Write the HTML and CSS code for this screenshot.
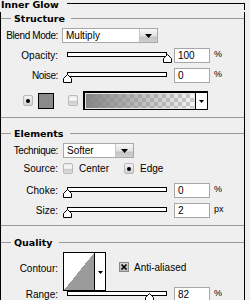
FILE: index.html
```html
<!DOCTYPE html>
<html>
<head>
<meta charset="utf-8">
<link rel="stylesheet" href="styles.css">
</head>
<body>
<div class="panel">
  <div class="hd"><span class="hd-title">Inner Glow</span><span class="hd-line"></span></div>
  <div class="frame">
    <section class="sec sec-structure">
      <div class="sec-hd"><span class="ln-s"></span><span class="sec-title">Structure</span><span class="ln"></span></div>
      <div class="row r-blend">
        <span class="lbl tight">Blend Mode:</span>
        <div class="select w-blend"><span class="sel-val">Multiply</span><span class="sel-btn"><svg width="7" height="4" viewBox="0 0 7 4"><path d="M0 0h7L3.5 4z"/></svg></span></div>
      </div>
      <div class="row r-opacity">
        <span class="lbl">Opacity:</span>
        <div class="slider"><div class="track"></div><svg class="thumb" style="left:100px" width="9" height="9" viewBox="0 0 9 9"><path d="M4.5 .5L8.5 4.5V8.5H.5V4.5z" fill="#fff" stroke="#000"/></svg></div>
        <div class="num">100</div><span class="unit">%</span>
      </div>
      <div class="row r-noise">
        <span class="lbl tight">Noise:</span>
        <div class="slider"><div class="track"></div><svg class="thumb" style="left:0px" width="9" height="9" viewBox="0 0 9 9"><path d="M4.5 .5L8.5 4.5V8.5H.5V4.5z" fill="#fff" stroke="#000"/></svg></div>
        <div class="num">0</div><span class="unit">%</span>
      </div>
      <div class="row-color">
        <span class="radio on"></span>
        <span class="swatch"></span>
        <span class="radio r2"></span>
        <div class="grad-box"><span class="grad"></span><span class="grad-btn"><svg width="5" height="3" viewBox="0 0 5 3"><path d="M0 0h5L2.5 3z"/></svg></span></div>
      </div>
    </section>

    <section class="sec sec-elements">
      <div class="sec-hd"><span class="ln-s"></span><span class="sec-title">Elements</span><span class="ln"></span></div>
      <div class="row r-tech">
        <span class="lbl tight">Technique:</span>
        <div class="select w-tech"><span class="sel-val">Softer</span><span class="sel-btn"><svg width="7" height="4" viewBox="0 0 7 4"><path d="M0 0h7L3.5 4z"/></svg></span></div>
      </div>
      <div class="row r-source">
        <span class="lbl">Source:</span>
        <span class="radio"></span><span class="opt">Center</span>
        <span class="radio on r-edge"></span><span class="opt">Edge</span>
      </div>
      <div class="row r-choke">
        <span class="lbl">Choke:</span>
        <div class="slider"><div class="track"></div><svg class="thumb" style="left:0px" width="9" height="9" viewBox="0 0 9 9"><path d="M4.5 .5L8.5 4.5V8.5H.5V4.5z" fill="#fff" stroke="#000"/></svg></div>
        <div class="num">0</div><span class="unit">%</span>
      </div>
      <div class="row r-size">
        <span class="lbl">Size:</span>
        <div class="slider"><div class="track"></div><svg class="thumb" style="left:0px" width="9" height="9" viewBox="0 0 9 9"><path d="M4.5 .5L8.5 4.5V8.5H.5V4.5z" fill="#fff" stroke="#000"/></svg></div>
        <div class="num">2</div><span class="unit">px</span>
      </div>
    </section>

    <section class="sec-quality">
      <div class="sec-hd"><span class="ln-s"></span><span class="sec-title">Quality</span><span class="ln"></span></div>
      <div class="row-contour">
        <span class="lbl lbl-contour">Contour:</span>
        <div class="contour"><span class="c-prev"></span><span class="c-btn"><svg width="5" height="3" viewBox="0 0 5 3"><path d="M0 0h5L2.5 3z"/></svg></span></div>
        <span class="check"><svg width="8" height="8" viewBox="0 0 8 8"><path d="M1.5 1.5L6.5 6.5M6.5 1.5L1.5 6.5" stroke="#000" stroke-width="1.6"/></svg></span>
        <span class="check-text">Anti-aliased</span>
      </div>
      <div class="row r-range">
        <span class="lbl">Range:</span>
        <div class="slider"><div class="track"></div><svg class="thumb" style="left:82px" width="9" height="9" viewBox="0 0 9 9"><path d="M4.5 .5L8.5 4.5V8.5H.5V4.5z" fill="#fff" stroke="#000"/></svg></div>
        <div class="num">82</div><span class="unit">%</span>
      </div>
    </section>
  </div>
</div>
</body>
</html>
```

FILE: styles.css
```css
* { box-sizing: border-box; }
body {
  margin: 0;
  width: 250px;
  height: 300px;
  overflow: hidden;
  background: #efefef;
  color: #000;
  font: 10px/15px "Liberation Sans", Arial, sans-serif;
}
.panel { width: 245px; }
.hd { display: flex; height: 10px; }
.hd-title {
  font: bold 9.5px/10px "DejaVu Sans", sans-serif;
  padding-left: 1px;
}
.hd-line {
  flex: 1;
  margin: 3px 0 0 8px;
  border-top: 1px solid #000;
  border-right: 1px solid #000;
}
.frame {
  border-left: 1px solid #000;
  border-right: 1px solid #000;
  height: 290px;
}
.sec { border-bottom: 1px solid #999; }
.sec-structure { padding-bottom: 7px; }
.sec-elements { padding-bottom: 7px; }
.sec-hd {
  display: flex;
  align-items: center;
  height: 13px;
  margin-top: 2px;
}
.sec-elements .sec-hd { margin-top: 9px; }
.sec-quality .sec-hd { margin-top: 10px; }
.ln-s { width: 10px; border-top: 1px solid #999; }
.ln { flex: 1; border-top: 1px solid #999; }
.sec-title {
  font: bold 9.5px/13px "DejaVu Sans", sans-serif;
  margin: 0 6px 0 3px;
}
.row { display: flex; align-items: center; height: 15px; margin-top: 5px; }
.r-blend { margin-top: 3px; }
.r-tech { margin-top: 3px; }
.r-source { margin-top: 3px; }
.r-choke { margin-top: 7px; }
.r-range { margin-top: -4px; }
.lbl { width: 57px; margin-right: 5px; text-align: right; flex: none; }
.tight { letter-spacing: -0.4px; }

.select {
  display: flex;
  height: 15px;
  border: 1px solid #a8a8a8;
  background: #fff;
}
.w-blend { width: 96px; margin-left: -1px; }
.w-tech { width: 71px; }
.sel-val { flex: 1; padding-left: 3px; line-height: 13px; }
.sel-btn {
  width: 18px;
  display: flex;
  align-items: center;
  justify-content: center;
  background: linear-gradient(#f7f7f7, #e2e2e2 55%, #c4c4c4 60%, #cfcfcf);
  border-left: 1px solid #c6c6c6;
}

.slider { position: relative; width: 108px; height: 15px; margin-right: 3px; flex: none; }
.track {
  margin: 4px 4px 0 4px;
  height: 5px;
  border: 1px solid #000;
  background: #fff;
}
.thumb { position: absolute; top: 6px; }
.num {
  width: 36px;
  height: 15px;
  border: 1px solid #a4a8ad;
  background: #fff;
  padding-left: 3px;
  line-height: 13px;
  flex: none;
}
.unit {
  align-self: flex-start;
  margin-left: 4px;
  font-size: 9px;
  line-height: 10px;
  padding-top: 1px;
}

.row-color {
  display: flex;
  align-items: center;
  height: 19px;
  margin-top: 8px;
  padding-left: 22px;
}
.radio {
  width: 10px;
  height: 11px;
  flex: none;
  border: 1px solid #b8b8b8;
  border-radius: 2px;
  background: linear-gradient(#e6e6e6, #fafafa 35%, #ececec 50%, #c9c9c9 55%, #dedede);
  display: flex;
  align-items: center;
  justify-content: center;
}
.radio.on { background: linear-gradient(#f2f2f2, #e0e0e0 60%, #cfcfcf); }
.radio.on::after {
  content: "";
  width: 4px;
  height: 4px;
  border-radius: 50%;
  background: #000;
}
.swatch {
  width: 16px;
  height: 16px;
  margin-left: 5px;
  border: 1px solid #000;
  background: #8a8a8a;
}
.r2 { margin-left: 14px; }
.grad-box {
  display: flex;
  width: 125px;
  height: 19px;
  margin-left: 5px;
  border: solid #000;
  border-width: 2px 1px 1px 2px;
  background: #fff;
}
.grad {
  flex: 1;
  border: 1px solid #e4e4e4;
  background-image:
    linear-gradient(to right, #858585, rgba(133,133,133,0)),
    repeating-conic-gradient(#c9c9c9 0 25%, #f5f5f5 0 50%);
  background-size: 100% 100%, 8px 8px;
}
.grad-btn {
  width: 12px;
  border-left: 1px solid #000;
  display: flex;
  align-items: center;
  justify-content: center;
}

.opt { margin-left: 6px; }
.r-edge { margin-left: 15px; }

.row-contour {
  display: flex;
  align-items: flex-start;
  height: 39px;
  margin-top: 3px;
}
.lbl-contour { margin-top: 9px; }
.contour {
  display: flex;
  width: 43px;
  height: 39px;
  border: 1px solid #000;
  background: #fff;
}
.c-prev {
  width: 30px;
  background: linear-gradient(to bottom right, #fff 50%, #9b9b9b 50%);
}
.c-btn {
  flex: 1;
  border-left: 1px solid #000;
  display: flex;
  align-items: center;
  justify-content: center;
  padding-top: 2px;
}
.check {
  width: 10px;
  height: 10px;
  margin: 10px 0 0 13px;
  border: 1px solid #8a8a8a;
  background: linear-gradient(#d8d8d8, #b4b4b4);
  display: flex;
  align-items: center;
  justify-content: center;
}
.check-text { margin: 8px 0 0 5px; }
```
